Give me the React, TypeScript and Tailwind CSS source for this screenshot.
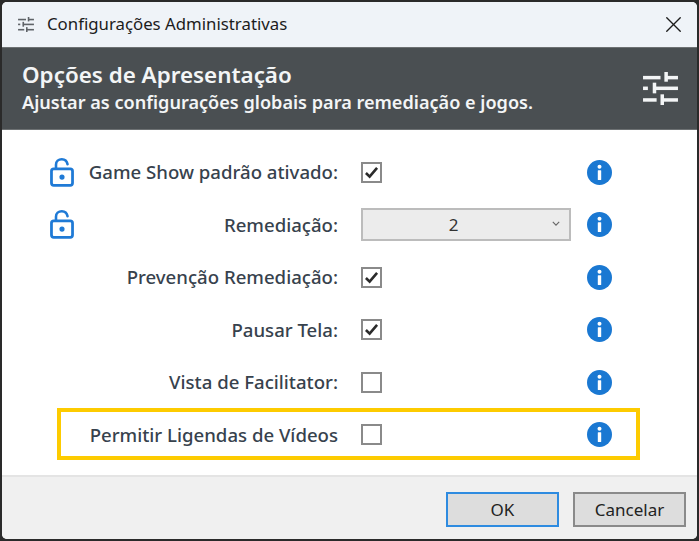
import React from "react";
import { X } from "lucide-react";

type Row = {
  label: string;
  locked?: boolean;
  checked?: boolean;
  select?: string;
  highlight?: boolean;
};

const rows: Row[] = [
  { label: "Game Show padrão ativado:", locked: true, checked: true },
  { label: "Remediação:", locked: true, select: "2" },
  { label: "Prevenção Remediação:", checked: true },
  { label: "Pausar Tela:", checked: true },
  { label: "Vista de Facilitator:", checked: false },
  { label: "Permitir Ligendas de Vídeos", checked: false, highlight: true },
];

function Sliders({ className }: { className: string }) {
  return (
    <svg viewBox="0 0 36 34" className={className} fill="currentColor">
      <rect x="0" y="4" width="18" height="3.6" />
      <rect x="24" y="4" width="12" height="3.6" />
      <rect x="22" y="0" width="3.6" height="10" />
      <rect x="0" y="15" width="5" height="3.6" />
      <rect x="11" y="15" width="25" height="3.6" />
      <rect x="10" y="11" width="3.6" height="11" />
      <rect x="0" y="27" width="14" height="3.6" />
      <rect x="20" y="27" width="16" height="3.6" />
      <rect x="18" y="23" width="3.6" height="11" />
    </svg>
  );
}

function Lock() {
  return (
    <svg viewBox="0 0 26 32" className="w-[24px] h-[31px] text-[#1f7ad6]" fill="none" stroke="currentColor">
      <path d="M6.500 12V7.500C6.500 4 9.200 1.600 12.800 1.600c3.200 0 5.600 2.200 6.200 5.400" strokeWidth="2.800" strokeLinecap="round" />
      <rect x="1.600" y="12" width="22.800" height="18" rx="2.500" strokeWidth="3" />
      <circle cx="13" cy="21" r="2.800" fill="currentColor" stroke="none" />
    </svg>
  );
}

function Info() {
  return (
    <svg viewBox="0 0 25 25" className="w-[25px] h-[25px]">
      <circle cx="12.500" cy="12.500" r="12.500" fill="#1a78d2" />
      <circle cx="12.500" cy="6.800" r="2" fill="#fff" />
      <rect x="10.800" y="10.300" width="3.400" height="9.700" rx="0.500" fill="#fff" />
    </svg>
  );
}

function Check({ on }: { on?: boolean }) {
  return (
    <div className="w-[21px] h-[21px] border-2 border-[#8a8a8a] bg-white flex items-center justify-center">
      {on && (
        <svg viewBox="0 0 16 14" className="w-[15px] h-[13px]">
          <path d="M2 7.500 L6 11.500 L14 2" fill="none" stroke="#2b2b2b" strokeWidth="2.800" />
        </svg>
      )}
    </div>
  );
}

export default function App() {
  return (
    <div
      className="w-[699px] h-[541px] bg-[#2a2a2a] p-[2px] overflow-hidden"
      style={{ fontFamily: '"Noto Sans", "Open Sans", sans-serif' }}
    >
      <div className="w-full h-full rounded-[5px] overflow-hidden bg-white flex flex-col">
        <div className="h-[45px] shrink-0 bg-[#eff3f8] flex items-center pl-[16px] pr-[10px] text-[#1c1c1c]">
          <Sliders className="w-[16px] h-[15px] text-[#5f6368]" />
          <span className="ml-[13px] text-[16.800px] leading-none">Configurações Administrativas</span>
          <X className="ml-auto w-[27px] h-[27px]" strokeWidth={1.200} />
        </div>

        <div className="h-[83px] shrink-0 bg-[#4a4f52] border-t border-b border-[#6d7173] flex items-center justify-between pl-[20px] pr-[19px] text-[#f3f5f6]">
          <div className="-mt-[1px]">
            <div className="text-[22.400px] leading-[28px] font-semibold">Opções de Apresentação</div>
            <div className="text-[18.100px] leading-[26px] font-semibold">
              Ajustar as configurações globais para remediação e jogos.
            </div>
          </div>
          <Sliders className="w-[35px] h-[33px] text-[#f3f5f6]" />
        </div>

        <div className="h-[345px] shrink-0 pt-[16px]">
          {rows.map((r) => (
            <div key={r.label} className="relative h-[52.500px] grid grid-cols-[46px_290px_236px_50px] items-center">
              <div className="flex justify-end -mr-[26px] pl-[46px]">
                {r.locked && <Lock />}
              </div>
              <div className="text-right text-[18.600px] font-medium text-[#37424d] whitespace-nowrap">{r.label}</div>
              <div className="pl-[23px]">
                {r.select ? (
                  <div className="w-[210px] h-[33px] border-2 border-[#bcbcbc] bg-[#ececec] flex items-center relative">
                    <span className="flex-1 text-center text-[17px] text-[#333] pr-[33px] pl-[8px]">{r.select}</span>
                    <svg viewBox="0 0 10 6" className="absolute right-[9px] top-[11px] w-[8px] h-[5px]">
                      <path d="M1 1l4 4 4-4" fill="none" stroke="#666" strokeWidth="1.400" />
                    </svg>
                  </div>
                ) : (
                  <Check on={r.checked} />
                )}
              </div>
              <div className="flex justify-center">
                <Info />
              </div>
              {r.highlight && (
                <div className="absolute left-[55px] top-[-1px] w-[583px] h-[52px] border-[4px] border-[#fdcb00]" />
              )}
            </div>
          ))}
        </div>

        <div className="flex-1 bg-[#f0f0f0] border-t-2 border-[#e4e4e4] flex items-start justify-end gap-[14px] pr-[11px] pt-[15px]">
          <div className="w-[113px] h-[35px] border-2 border-[#2e8be0] bg-[#dddddd] flex items-center justify-center text-[17px] text-[#222]">
            OK
          </div>
          <div className="w-[113px] h-[35px] border-2 border-[#8a8a8a] bg-[#dddddd] flex items-center justify-center text-[17px] text-[#222]">
            Cancelar
          </div>
        </div>
      </div>
    </div>
  );
}
